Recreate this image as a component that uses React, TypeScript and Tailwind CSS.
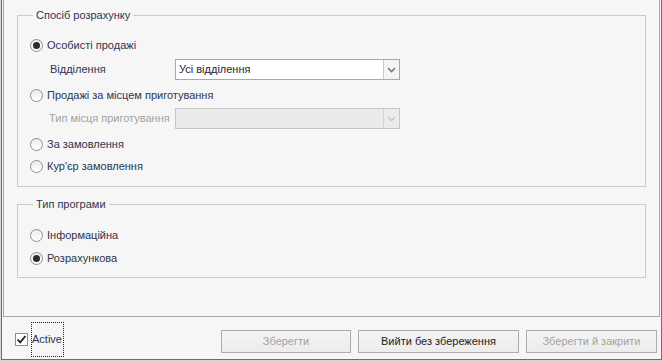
import React from 'react';

const Radio = ({ checked, label }: { checked?: boolean; label: string }) => (
  <div className="flex h-5 items-center">
    <span className="flex h-[13px] w-[13px] items-center justify-center rounded-full border border-[#8e8e8e] bg-gradient-to-b from-[#ececec] to-white">
      {checked && <span className="h-[7px] w-[7px] rounded-full bg-[#2b2b2b]" />}
    </span>
    <span className="ml-[4px]">{label}</span>
  </div>
);

const Chevron = ({ color }: { color: string }) => (
  <svg width="9" height="6" viewBox="0 0 9 6">
    <path d="M1 1 L4.5 4.5 L8 1" fill="none" stroke={color} strokeWidth="1.6" />
  </svg>
);

const Select = ({ value, disabled }: { value?: string; disabled?: boolean }) => (
  <div
    className={`flex h-[21px] w-[225px] border ${
      disabled ? 'border-[#c6c6c6] bg-[#ebebeb]' : 'border-[#a9a9a9] bg-white'
    }`}
  >
    <div className="flex flex-1 items-center pl-[3px] text-[#1f2433]">{value}</div>
    <div
      className={`flex w-[16px] items-center justify-center border-l ${
        disabled ? 'border-[#d2d2d2] bg-[#ebebeb]' : 'border-[#c9c9c9] bg-[#f4f4f4]'
      }`}
    >
      <Chevron color={disabled ? '#c8c8c8' : '#7a7a7a'} />
    </div>
  </div>
);

const Button = ({ label, disabled, w }: { label: string; disabled?: boolean; w: string }) => (
  <button
    className={`h-[23px] ${w} border border-[#adadad] bg-gradient-to-b from-[#f4f4f4] to-[#ececec] text-[11px] ${
      disabled ? 'text-[#a3a3a3]' : 'text-[#1a1a1a]'
    }`}
  >
    {label}
  </button>
);

export default function App() {
  return (
    <div className="h-[361px] w-[662px] overflow-hidden bg-[#d6d6d6] font-['Liberation_Sans',sans-serif] text-[11px] text-[#2d3550]">
      <div className="ml-[1px] flex h-[360px] w-[661px] flex-col border-x border-b border-[#6e6e6e] bg-[#f6f6f6]">
        <div className="ml-[1px] mr-[1px] h-[317px] border-x border-b border-[#a8a8a8] pt-[8px]">
          <fieldset className="ml-[13px] w-[629px] border border-[#cbcbcb] px-[12px] pb-[10px] pt-[13px]">
            <legend className="ml-[3px] px-[3px] leading-[14px]">Спосіб розрахунку</legend>
            <Radio checked label="Особисті продажі" />
            <div className="mt-[4px] flex h-[21px] items-center pl-[20px]">
              <span className="w-[125px] whitespace-nowrap">Відділення</span>
              <Select value="Усі відділення" />
            </div>
            <div className="mt-[5px]">
              <Radio label="Продажі за місцем приготування" />
            </div>
            <div className="mt-[3px] flex h-[21px] items-center pl-[19px]">
              <span className="w-[126px] whitespace-nowrap text-[#a2a2a2]">Тип місця приготування</span>
              <Select disabled />
            </div>
            <div className="mt-[5px]">
              <Radio label="За замовлення" />
            </div>
            <div className="mt-[2px]">
              <Radio label="Кур'єр замовлення" />
            </div>
          </fieldset>
          <fieldset className="ml-[13px] mt-[10px] w-[629px] border border-[#cbcbcb] px-[12px] pb-[9px] pt-[14px]">
            <legend className="ml-[3px] px-[3px] leading-[14px]">Тип програми</legend>
            <Radio label="Інформаційна" />
            <div className="mt-[3px]">
              <Radio checked label="Розрахункова" />
            </div>
          </fieldset>
        </div>
        <div className="flex flex-1 items-start">
          <div className="ml-[13px] mt-[5px] flex h-[35px] items-center">
            <span className="flex h-[13px] w-[13px] items-center justify-center border border-[#8e8e8e] bg-white">
              <svg width="11" height="11" viewBox="0 0 11 11">
                <path d="M1.5 5.5 L4.2 8.3 L9.5 2" fill="none" stroke="#1e1e1e" strokeWidth="1.8" />
              </svg>
            </span>
            <span className="ml-[3px] flex h-[35px] items-center border border-dotted border-[#222] pr-[1px]">
              Active
            </span>
          </div>
          <div className="flex-1" />
          <div className="mr-[4px] mt-[13px] flex gap-[7px]">
            <Button label="Зберегти" disabled w="w-[130px]" />
            <Button label="Вийти без збереження" w="w-[161px]" />
            <Button label="Зберегти й закрити" disabled w="w-[131px]" />
          </div>
        </div>
      </div>
    </div>
  );
}
